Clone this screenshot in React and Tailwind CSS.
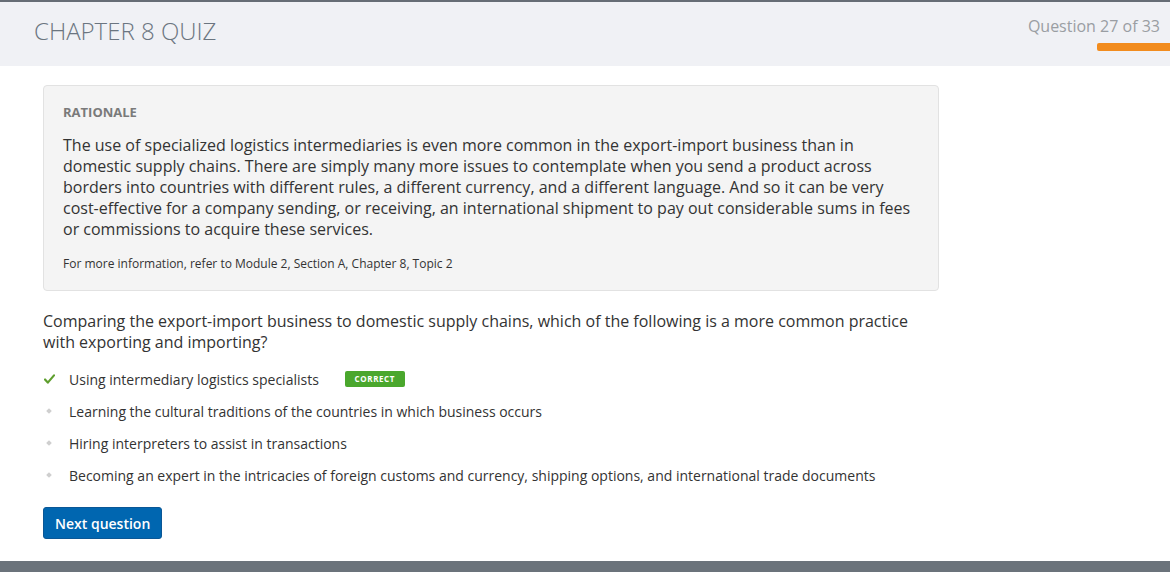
export default function App() {
  const font = { fontFamily: '"Open Sans", "Noto Sans", sans-serif' };
  const options = [
    "Learning the cultural traditions of the countries in which business occurs",
    "Hiring interpreters to assist in transactions",
    "Becoming an expert in the intricacies of foreign customs and currency, shipping options, and international trade documents",
  ];
  return (
    <div className="w-[1170px] h-[572px] bg-white flex flex-col overflow-hidden" style={font}>
      <div className="h-[2px] bg-[#666d75]" />
      <header className="h-[64px] bg-[#f0f1f5] flex items-start justify-between">
        <h1 className="ml-[34px] mt-[14px] text-[24px] font-light leading-[30px] text-[#6b7580]">
          CHAPTER 8 QUIZ
        </h1>
        <div className="flex flex-col items-end">
          <div className="mt-[13px] mr-[10px] text-[16px] leading-[22px] text-[#9a9ea3]">Question 27 of 33</div>
          <div className="mt-[6px] w-[73px] h-[8px] bg-[#f28c1e] rounded-l-[2px]" />
        </div>
      </header>
      <main className="flex-1 pl-[43px] pt-[19px]">
        <section className="w-[896px] bg-[#f4f4f4] border border-[#e2e2e2] rounded-[4px] px-[19px] pt-[17px] pb-[18px]">
          <div className="text-[13px] font-bold text-[#7a7a7a] leading-[18px]">RATIONALE</div>
          <p className="mt-[14px] text-[16px] leading-[21px] text-[#333]">
            The use of specialized logistics intermediaries is even more common in the export-import business than in domestic supply chains. There are simply many more issues to contemplate when you send a product across borders into countries with different rules, a different currency, and a different language. And so it can be very cost-effective for a company sending, or receiving, an international shipment to pay out considerable sums in fees or commissions to acquire these services.
          </p>
          <p className="mt-[15px] text-[12px] leading-[17px] text-[#333]">
            For more information, refer to Module 2, Section A, Chapter 8, Topic 2
          </p>
        </section>
        <p className="mt-[20px] w-[880px] text-[16px] leading-[21px] text-[#333]">
          Comparing the export-import business to domestic supply chains, which of the following is a more common practice with exporting and importing?
        </p>
        <ul className="mt-[10px] flex flex-col">
          <li className="h-[32px] flex items-center text-[14px] text-[#333]">
            <span className="w-[26px] flex justify-start pl-[1px]">
              <svg width="11" height="10" viewBox="0 0 11 10">
                <path d="M1 5.5 L3.8 8.6 L10 1.4" fill="none" stroke="#5e9e2e" strokeWidth="2.2" strokeLinecap="round" strokeLinejoin="round" />
              </svg>
            </span>
            <span>Using intermediary logistics specialists</span>
            <span className="ml-[26px] h-[16px] w-[60px] bg-[#4aa72d] rounded-[2px] text-white text-[8px] font-bold tracking-[0.6px] flex items-center justify-center">
              CORRECT
            </span>
          </li>
          {options.map((o) => (
            <li key={o} className="h-[32px] flex items-center text-[14px] text-[#333]">
              <span className="w-[26px] flex pl-[4px]">
                <span className="w-[4px] h-[4px] bg-[#cfcfcf] rotate-45 inline-block" />
              </span>
              <span>{o}</span>
            </li>
          ))}
        </ul>
        <button className="mt-[16px] h-[32px] px-[11px] bg-[#0066b0] border border-[#0a5796] rounded-[3px] text-white text-[14px] font-semibold" style={font}>
          Next question
        </button>
      </main>
      <div className="h-[11px] bg-[#6b737b]" />
    </div>
  );
}
